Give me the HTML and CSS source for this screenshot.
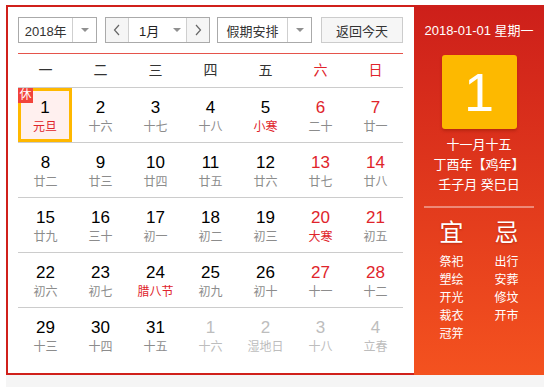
FILE: index.html
```html
<!DOCTYPE html>
<html lang="zh">
<head>
  <meta charset="UTF-8" />
  <title>万年历</title>
  <link rel="stylesheet" href="styles.css">
</head>
<body>
  <div class="page">
    <div class="widget">
      <div class="cal">
        <div class="main">
          <div class="toolbar">
            <div class="select year-sel">
              <span class="sel-text">2018年</span>
              <span class="sel-arrow"><i class="tri"></i></span>
            </div>
            <div class="select month-sel">
              <span class="nav-btn">
                <svg width="8" height="12" viewBox="0 0 8 12"><polyline points="6,1 1.5,6 6,11" fill="none" stroke="#666" stroke-width="1.2"/></svg>
              </span>
              <span class="month-mid">1月 <i class="tri"></i></span>
              <span class="nav-btn">
                <svg width="8" height="12" viewBox="0 0 8 12"><polyline points="2,1 6.5,6 2,11" fill="none" stroke="#666" stroke-width="1.2"/></svg>
              </span>
            </div>
            <div class="select holiday-sel">
              <span class="sel-text">假期安排</span>
              <span class="sel-arrow"><i class="tri"></i></span>
            </div>
            <div class="today-btn">返回今天</div>
          </div>

          <div class="weekdays">
            <span>一</span><span>二</span><span>三</span><span>四</span><span>五</span>
            <span class="wkend">六</span><span class="wkend">日</span>
          </div>

          <div class="days">
            <div class="row">
              <div class="day selected"><span class="rest">休</span><div class="num">1</div><div class="lunar fest">元旦</div></div>
              <div class="day"><div class="num">2</div><div class="lunar">十六</div></div>
              <div class="day"><div class="num">3</div><div class="lunar">十七</div></div>
              <div class="day"><div class="num">4</div><div class="lunar">十八</div></div>
              <div class="day"><div class="num">5</div><div class="lunar fest">小寒</div></div>
              <div class="day wkend"><div class="num">6</div><div class="lunar">二十</div></div>
              <div class="day wkend"><div class="num">7</div><div class="lunar">廿一</div></div>
            </div>
            <div class="row">
              <div class="day"><div class="num">8</div><div class="lunar">廿二</div></div>
              <div class="day"><div class="num">9</div><div class="lunar">廿三</div></div>
              <div class="day"><div class="num">10</div><div class="lunar">廿四</div></div>
              <div class="day"><div class="num">11</div><div class="lunar">廿五</div></div>
              <div class="day"><div class="num">12</div><div class="lunar">廿六</div></div>
              <div class="day wkend"><div class="num">13</div><div class="lunar">廿七</div></div>
              <div class="day wkend"><div class="num">14</div><div class="lunar">廿八</div></div>
            </div>
            <div class="row">
              <div class="day"><div class="num">15</div><div class="lunar">廿九</div></div>
              <div class="day"><div class="num">16</div><div class="lunar">三十</div></div>
              <div class="day"><div class="num">17</div><div class="lunar">初一</div></div>
              <div class="day"><div class="num">18</div><div class="lunar">初二</div></div>
              <div class="day"><div class="num">19</div><div class="lunar">初三</div></div>
              <div class="day wkend"><div class="num">20</div><div class="lunar fest">大寒</div></div>
              <div class="day wkend"><div class="num">21</div><div class="lunar">初五</div></div>
            </div>
            <div class="row">
              <div class="day"><div class="num">22</div><div class="lunar">初六</div></div>
              <div class="day"><div class="num">23</div><div class="lunar">初七</div></div>
              <div class="day"><div class="num">24</div><div class="lunar fest">腊八节</div></div>
              <div class="day"><div class="num">25</div><div class="lunar">初九</div></div>
              <div class="day"><div class="num">26</div><div class="lunar">初十</div></div>
              <div class="day wkend"><div class="num">27</div><div class="lunar">十一</div></div>
              <div class="day wkend"><div class="num">28</div><div class="lunar">十二</div></div>
            </div>
            <div class="row">
              <div class="day"><div class="num">29</div><div class="lunar">十三</div></div>
              <div class="day"><div class="num">30</div><div class="lunar">十四</div></div>
              <div class="day"><div class="num">31</div><div class="lunar">十五</div></div>
              <div class="day other"><div class="num">1</div><div class="lunar">十六</div></div>
              <div class="day other"><div class="num">2</div><div class="lunar">湿地日</div></div>
              <div class="day other"><div class="num">3</div><div class="lunar">十八</div></div>
              <div class="day other"><div class="num">4</div><div class="lunar">立春</div></div>
            </div>
          </div>
        </div>

        <div class="side">
          <div class="side-date">2018-01-01 星期一</div>
          <div class="big-day">1</div>
          <div class="lunar-info">
            <p>十一月十五</p>
            <p>丁酉年【鸡年】</p>
            <p>壬子月 癸巳日</p>
          </div>
          <div class="side-line"></div>
          <div class="yiji">
            <div class="yiji-col">
              <div class="yiji-title">宜</div>
              <p>祭祀</p><p>塑绘</p><p>开光</p><p>裁衣</p><p>冠笄</p>
            </div>
            <div class="yiji-col">
              <div class="yiji-title">忌</div>
              <p>出行</p><p>安葬</p><p>修坟</p><p>开市</p>
            </div>
          </div>
        </div>
      </div>
    </div>
  </div>
</body>
</html>
```

FILE: styles.css
```css
:root {
  --red: #d0201b;
  --red-text: #e0242b;
  --line: #cccccc;
  --gray: #8c8c8c;
}

body {
  margin: 0;
  font-family: "Liberation Sans", "Noto Sans CJK SC", sans-serif;
  background: #fff;
  color: #000;
}

.page {
  padding: 5px 0 0 6px;
}

.widget {
  width: 538px;
  background: #f5f5f5;
  padding-bottom: 20px;
}

.cal {
  display: flex;
  height: 370px;
}

/* left part */
.main {
  width: 408px;
  box-sizing: border-box;
  border: 2px solid var(--red);
  border-right: 0;
  background: #fff;
  padding: 10px 11px 0 10px;
}

.toolbar {
  display: flex;
  height: 26px;
  margin-bottom: 10px;
  font-size: 13px;
  color: #333;
}

.select {
  display: flex;
  box-sizing: border-box;
  height: 26px;
  border: 1px solid #aaaaaa;
  background: #fff;
}

.sel-text {
  display: flex;
  align-items: center;
  justify-content: center;
  border-right: 1px solid #cfcfcf;
}

.sel-arrow {
  display: flex;
  align-items: center;
  justify-content: center;
  width: 23px;
}

.tri {
  display: inline-block;
  width: 0;
  height: 0;
  border-left: 4px solid transparent;
  border-right: 4px solid transparent;
  border-top: 4px solid #909090;
}

.year-sel {
  width: 79px;
}

.year-sel .sel-text {
  width: 54px;
}

.month-sel {
  width: 105px;
  margin-left: 8px;
}

.nav-btn {
  display: flex;
  align-items: center;
  justify-content: center;
  width: 22px;
  background: #f5f5f5;
}

.month-mid {
  flex: 1;
  display: flex;
  align-items: center;
  gap: 14px;
  padding-left: 10px;
  border-left: 1px solid #cfcfcf;
  border-right: 1px solid #cfcfcf;
  color: #222;
}

.holiday-sel {
  width: 95px;
  margin-left: 7px;
}

.holiday-sel .sel-text {
  width: 70px;
}

.today-btn {
  width: 82px;
  height: 26px;
  box-sizing: border-box;
  margin-left: 9px;
  border: 1px solid #cccccc;
  background: #f6f6f6;
  display: flex;
  align-items: center;
  justify-content: center;
}

.weekdays {
  display: grid;
  grid-template-columns: repeat(7, 55px);
  height: 33px;
  line-height: 33px;
  border-top: 1px solid #e5534b;
  border-bottom: 1px solid var(--line);
  text-align: center;
  font-size: 14px;
  color: #333;
}

.weekdays .wkend {
  color: var(--red-text);
}

.row {
  display: grid;
  grid-template-columns: repeat(7, 55px);
  height: 54px;
  border-bottom: 1px solid var(--line);
}

.row:last-child {
  border-bottom: 0;
}

.day {
  position: relative;
  text-align: center;
  padding-top: 10px;
  box-sizing: border-box;
}

.num {
  font-size: 17px;
  line-height: 20px;
  color: #000;
}

.lunar {
  font-size: 12px;
  line-height: 18px;
  color: var(--gray);
}

.lunar.fest,
.wkend .num {
  color: var(--red-text);
}

.other .num,
.other .lunar {
  color: #bdbdbd;
}

.selected {
  width: 54px;
  background: #fff0ef;
  box-shadow: inset 0 0 0 3px #ffb800;
}

.rest {
  position: absolute;
  top: 0;
  left: 0;
  width: 15px;
  height: 15px;
  line-height: 15px;
  background: #f2433b;
  color: #fff;
  font-size: 12px;
}

/* right panel */
.side {
  width: 130px;
  background: linear-gradient(#cd1f1a, #f4521f);
  color: #fff;
  text-align: center;
}

.side-date {
  margin-top: 16px;
  font-size: 13px;
  line-height: 20px;
}

.big-day {
  width: 75px;
  height: 74px;
  margin: 14px auto 0;
  background: #fdb900;
  border-radius: 3px;
  box-shadow: 0 2px 3px rgba(120, 20, 0, 0.35);
  font-size: 54px;
  line-height: 74px;
}

.lunar-info {
  margin-top: 6px;
  font-size: 13px;
  line-height: 20px;
}

.lunar-info p,
.yiji-col p {
  margin: 0;
}

.side-line {
  height: 2px;
  margin: 11px 10px 0;
  background: rgba(255, 255, 255, 0.4);
}

.yiji {
  display: flex;
  padding: 0 10px;
  margin-top: 10px;
}

.yiji-col {
  width: 55px;
  font-size: 12px;
  line-height: 18px;
}

.yiji-title {
  font-size: 24px;
  line-height: 30px;
  margin-bottom: 5px;
  text-shadow: 0 1px 2px rgba(120, 20, 0, 0.4);
}
```
